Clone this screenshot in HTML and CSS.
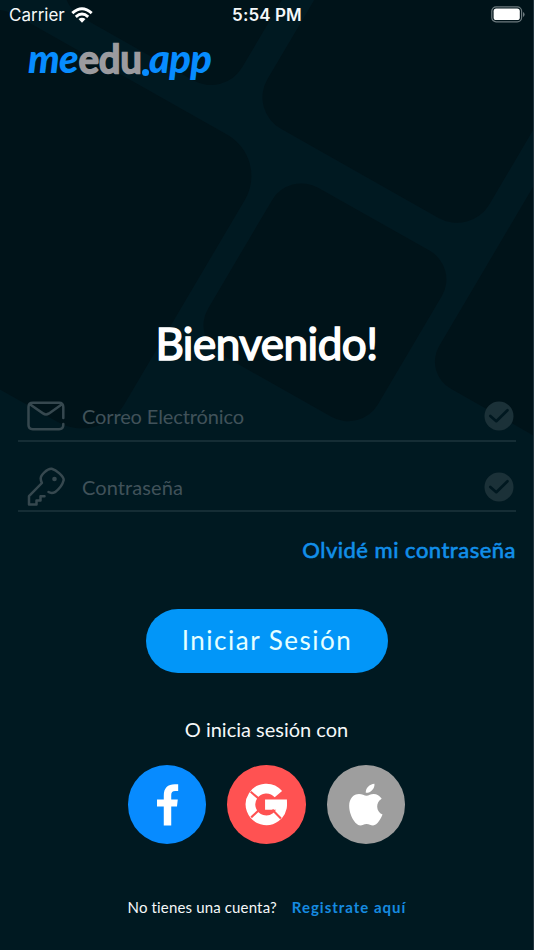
FILE: index.html
```html
<!DOCTYPE html>
<html lang="es">
<head>
<meta charset="utf-8">
<meta name="viewport" content="width=device-width">
<title>meedu.app</title>
<link rel="stylesheet" href="styles.css">
</head>
<body>
<main class="screen">
  <svg class="pattern" viewBox="0 0 534 950" aria-hidden="true">
    <g transform="translate(-1 0) scale(1 .979) rotate(30)" fill="#001319">
      <rect x="338.7" y="6.5" width="196" height="196" rx="34"/>
      <rect x="273" y="-283" width="256" height="256" rx="37"/>
      <rect x="558" y="-138" width="256" height="256" rx="32"/>
      <rect x="-25" y="5" width="340" height="339" rx="49"/>
      <rect x="45" y="-226" width="200" height="200" rx="36"/>
    </g>
  </svg>
  <header class="status">
    <div class="carrier"><span>Carrier</span>
      <svg width="22" height="16" viewBox="0 0 22 16"><g fill="none" stroke="#fff" stroke-width="2.9"><path d="M1.3 6.1Q11 -2.6 20.7 6.1"/><path d="M4.8 9.8Q11 4.3 17.2 9.8"/></g><path fill="#fff" d="M7.5 12.1Q11 9.2 14.5 12.1L11 15.7Z"/></svg>
    </div>
    <time class="clock">5:54 PM</time>
    <svg class="battery" width="34" height="17" viewBox="0 0 34 17"><rect x=".8" y=".8" width="29.8" height="15" rx="4.3" fill="none" stroke="#6c7a7e" stroke-width="1.2"/><rect x="2.6" y="2.6" width="26.2" height="11.4" rx="2.6" fill="#fff"/><path d="M32 6v5q1.6-.6 1.6-2.5T32 6Z" fill="#6c7a7e"/></svg>
  </header>
  <div class="logo"><span class="me">me</span><span class="edu">edu</span><span class="dot"></span><span class="ap">app</span></div>
  <h1>Bienvenido!</h1>
  <form class="form">
    <div class="field">
      <svg class="icon" width="40" height="40" viewBox="0 0 40 40"><path d="M37.3 22V11q0-4.2-4.2-4.2H7Q2.500 6.800 2.500 11v18q0 4.200 4.200 4.200h26.400q4.200 0 4.200-4.200v-1M3.800 8.200l13.200 9.200q3 2 6 0L36 8.200"/></svg>
      <span class="label user">Correo Electrónico</span>
      <svg class="check" width="30" height="30" viewBox="0 0 30 30"><circle cx="15" cy="15" r="14.500"/><path d="m6.300 15 6 5.200L23.500 9.200"/></svg>
    </div>
    <div class="field">
      <svg class="icon" width="40" height="40" viewBox="0 0 40 40"><path d="M22.500 25q3 1.800 6.500.2c4.500-3.400 7.700-8 8.700-12.200 0-4-7.500-10-12-11.200-4.200-.6-11 6.400-11 9.700 0 2 .7 3.300 1.200 4.500L3 29.200V37.500h7.500v-4h4v-4.300h4"/><circle class="hole" cx="28.500" cy="12" r="2.300"/></svg>
      <span class="label pass">Contraseña</span>
      <svg class="check" width="30" height="30" viewBox="0 0 30 30"><circle cx="15" cy="15" r="14.500"/><path d="m6.300 15 6 5.200L23.500 9.200"/></svg>
    </div>
    <a class="forgot">Olvidé mi contraseña</a>
    <button class="login" type="button">Iniciar Sesión</button>
  </form>
  <p class="or">O inicia sesión con</p>
  <div class="social">
    <a class="facebook"><svg viewBox="0 0 78 78"><path fill="#fff" d="M35.500 60V41.200h-6.700v-7h6.700v-3.700c0-8 3.900-11.500 11-11.500h3.300v6.800h-3c-2.700 0-3.900 1.200-3.900 4v4.400h6.500l-.8 7h-5.700V60Z"/></svg></a>
    <a class="google"><svg viewBox="0 0 78 78"><path fill="none" stroke="#fff" stroke-width="9.600" d="M51 29A15.700 15.700 0 1 0 54.700 39"/><path fill="#fff" d="M37.800 34.300h21.700q.6 5.500-1 10H37.800Z"/><path stroke="#ff5252" stroke-width="2.100" d="M31.500 33.400l-8-6.800M31.500 45l-7.500 7M45 44.500l8.500 8.500"/></svg></a>
    <a class="apple"><svg viewBox="0 0 78 78"><path fill="#fff" d="M39.200 30.500c-2-.1-4.500-1.700-7.400-1.700-5.500 0-9.800 4.600-9.800 11.700C22 49.500 28 60 33 60c2.300 0 3.600-1.500 6.300-1.500S43.200 60 45.700 60c4.300 0 8-7.200 9.400-10.800-6.800-3-7-12.300-.8-15.700-2-3.200-4.900-4.700-7.900-4.700-3.200 0-4.900 1.600-7.200 1.700ZM38.500 27.600c-.4-4.600 3.700-8.700 8.600-9.100.5 4.700-3.700 9.300-8.600 9.100Z"/></svg></a>
  </div>
  <footer><span class="ask">No tienes una cuenta?</span><a class="register">Registrate aquí</a></footer>
</main>
</body>
</html>
```
FILE: styles.css
```css
* { box-sizing: border-box; }
body { margin: 0; background: #001820; }
.screen {
  position: relative;
  display: flex;
  flex-direction: column;
  width: 534px;
  height: 950px;
  overflow: hidden;
  background: #001921;
  border-right: 1px solid #22343d;
  color: #f5f8f9;
  font-family: Lato, sans-serif;
  font-variant-ligatures: none;
  white-space: nowrap;
}
.pattern { position: absolute; top: 0; left: 0; width: 534px; height: 950px; }
.screen > :not(.pattern) { position: relative; }
.status {
  display: grid;
  grid-template-columns: 1fr auto 1fr;
  align-items: center;
  height: 30px;
  padding: 0 8px 0 9px;
  font: 17px/30px Inter, sans-serif;
}
.carrier { display: flex; align-items: center; gap: 6px; letter-spacing: 0; }
.clock { font-weight: 600; letter-spacing: .1px; }
.battery { justify-self: end; margin-bottom: 2px; }
.logo {
  display: flex;
  height: 60px;
  padding-left: 28px;
  font-size: 40px;
  line-height: 56px;
  font-weight: 900;
  color: #078cff;
}
.me, .ap { font-style: italic; letter-spacing: -.8px; }
.edu { margin-left: 1px; color: #9b9b9f; font-size: 38px; font-weight: 400; letter-spacing: .2px; -webkit-text-stroke: 2.6px #9b9b9f; }
.dot { width: 7px; height: 7px; margin: 39px 0 0 0; border-radius: 50%; background: #078cff; }
h1 {
  margin: 223px 0 0;
  height: 60px;
  text-align: center;
  font-size: 44px;
  line-height: 60px;
  font-weight: 400;
  letter-spacing: -.5px;
  color: #fff;
  -webkit-text-stroke: 1.5px #fff;
}
.form { display: flex; flex-direction: column; margin: 19px 17px 0 18px; }
.field {
  display: flex;
  align-items: center;
  height: 70px;
  padding: 21px 2px 0 8px;
  border-bottom: 2px solid #152d35;
  font-size: 20px;
  color: #40525a;
}
.field:first-child { height: 50px; padding-top: 0; }
.icon { fill: none; stroke: #36484f; stroke-width: 2.500; stroke-linecap: round; stroke-linejoin: round; }
.hole { fill: #36484f; stroke: none; }
.label { flex: 1; margin-left: 16px; }
.user { letter-spacing: -.12px; }
.pass { letter-spacing: .1px; }
.check { fill: #1b3138; }
.check path { fill: none; stroke: #001820; stroke-width: 2.700; stroke-linecap: round; stroke-linejoin: round; }
.forgot { align-self: flex-end; margin-top: 23px; line-height: 30px; font-size: 22px; letter-spacing: .5px; color: #128fe9; -webkit-text-stroke: .6px #128fe9; }
.login {
  align-self: center;
  width: 242px;
  height: 64px;
  margin-top: 44px;
  padding: 0 0 2px;
  border: 0;
  border-radius: 32px;
  background: #0296f8;
  color: #e5ffff;
  font: 26px/62px Lato, sans-serif;
  letter-spacing: 1.500px;
}
.or { margin: 41px 0 0; line-height: 30px; font-size: 20px; text-align: center; }
.social { display: flex; justify-content: center; gap: 21px; margin-top: 21px; }
.social a { width: 78.600px; height: 78.600px; border-radius: 50%; }
.social svg { display: block; width: 78.600px; height: 78.600px; }
.facebook { background: #078bff; }
.google { background: #ff5252; }
.apple { background: #9e9e9e; }
footer { display: flex; justify-content: center; gap: 15px; margin-top: 48px; line-height: 30px; font-size: 15px; }
.ask { letter-spacing: .15px; }
.register { color: #168be0; font-weight: 700; letter-spacing: 1px; margin-right: -1px; }
```
